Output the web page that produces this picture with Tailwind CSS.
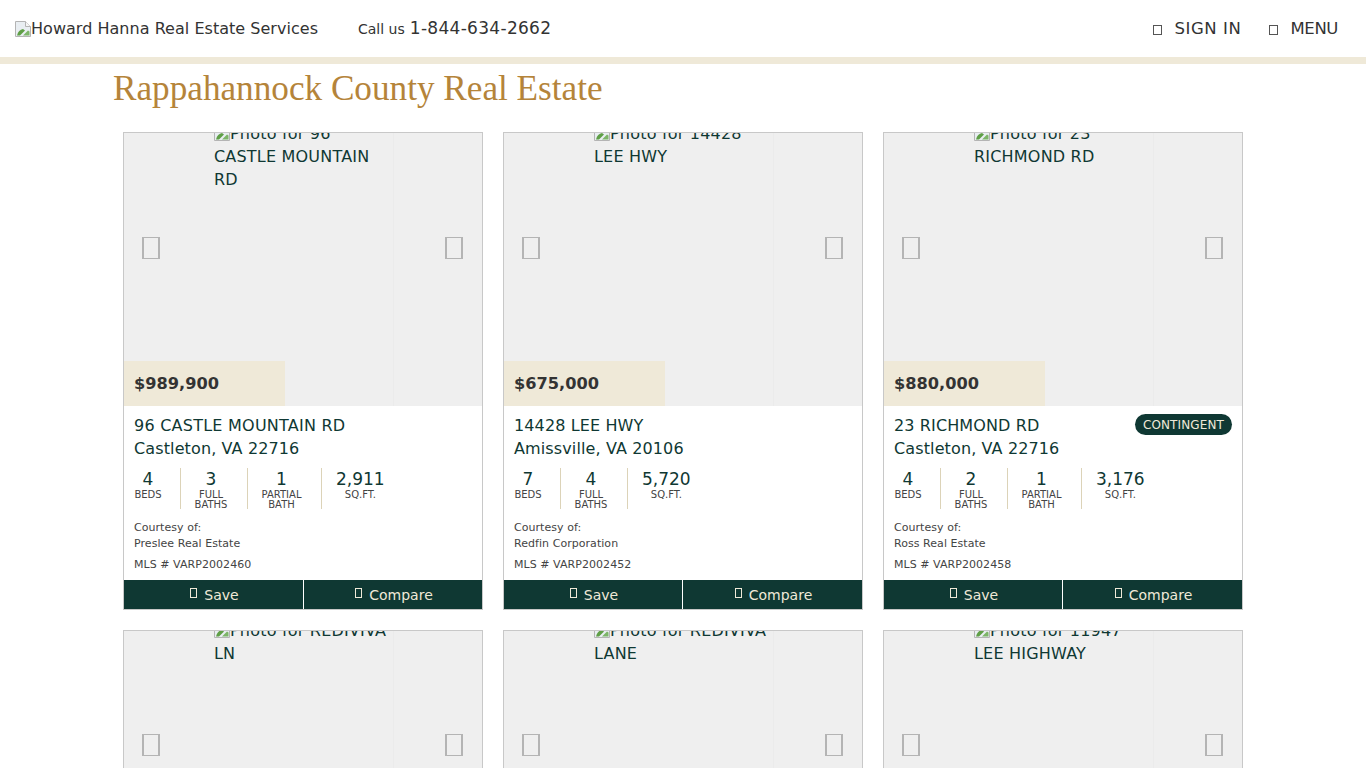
<!DOCTYPE html>
<html lang="en">
<head>
<meta charset="utf-8">
<title>Rappahannock County Real Estate</title>
<script src="https://cdn.jsdelivr.net/npm/@tailwindcss/browser@4"></script>
</head>
<body class="h-[768px] overflow-hidden bg-white font-['DejaVu_Sans',sans-serif] text-[#0f3833]">
<svg width="0" height="0" class="absolute">
  <symbol id="broken" viewBox="0 0 16 16">
    <path d="M.5.5h10l5 5v10H.5z" fill="#e9eef2" stroke="#b4b4b4"/>
    <path d="M10.5.5v5h5" fill="#f6f6f6" stroke="#b4b4b4"/>
    <path d="M2 14.5c1-4 3-6 6-6.500l2 1.500-5 5z" fill="#5f9f46"/>
    <path d="M8 14.500l5-5 1.500 1v4z" fill="#7db568"/>
  </symbol>
</svg>
<header class="flex h-[64px] items-center justify-between border-b-[7px] border-[#efe9d8] pl-[15px] pr-[28px] text-[#333]">
  <div class="flex items-center">
    <div class="flex w-[302px] items-center text-[16px] tracking-[0.03px] text-[#333]"><svg class="h-4 w-4 shrink-0"><use href="#broken"/></svg><span class="whitespace-nowrap">Howard Hanna Real Estate Services</span></div>
    <div class="ml-[41px] flex items-baseline gap-[5px]"><span class="text-[14px]">Call us</span><span class="text-[17px] tracking-[0.3px]">1-844-634-2662</span></div>
  </div>
  <nav class="flex items-center gap-[27px] pt-[2px] text-[16.500px]">
    <div class="flex items-center gap-[12px] tracking-[0.6px]"><span class="h-[10px] w-[9px] border border-[#555]"></span>SIGN IN</div>
    <div class="flex items-center gap-[13px] tracking-[-0.4px]"><span class="h-[10px] w-[9px] border border-[#555]"></span>MENU</div>
  </nav>
</header>
<main>
  <h1 class="ml-[113px] mt-[6px] h-[62px] font-['Liberation_Serif',serif] text-[35.200px] leading-[38px] text-[#b5843a]">Rappahannock County Real Estate</h1>
  <div class="ml-[123px] grid w-[1120px] grid-cols-3 gap-x-[20px] gap-y-[20px]">

    <article class="flex h-[478px] flex-col border border-[#c8c8c8] bg-white">
      <div class="relative h-[273px] overflow-hidden bg-[#efefef]">
        <div class="absolute inset-y-0 left-[269px] w-px bg-[#ebebeb]"></div>
        <div class="ml-[90px] -mt-[11px] w-[179px] text-[16px] leading-[23px] tracking-[0.2px]"><svg class="inline h-4 w-4 align-[-2px]"><use href="#broken"/></svg>Photo for 96 CASTLE MOUNTAIN RD</div>
        <span class="absolute left-[18px] top-[104px] h-[22px] w-[18px] border-x-2 border-y border-[#b4b4b4]"></span>
        <span class="absolute right-[19px] top-[104px] h-[22px] w-[18px] border-x-2 border-y border-[#b4b4b4]"></span>
        <div class="absolute bottom-0 left-0 flex h-[45px] w-[161px] items-center bg-[#efe9d8] pl-[10px] pt-[2px] text-[16.200px] font-bold text-[#333]">$989,900</div>
      </div>
      <div class="relative px-[10px] pt-[8px]">
        <p class="text-[16px] leading-[23px] tracking-[0.24px]">96 CASTLE MOUNTAIN RD<br><span class="tracking-[0.12px]">Castleton, VA 22716</span></p>
        <div class="mt-[8px] flex h-[41px] text-center">
          <div class="w-[47px] border-r border-[#dcd3b8] pr-[18px]"><div class="text-[17px] leading-[22px]">4</div><div class="text-[10px] leading-[10px] text-[#444]">BEDS</div></div>
          <div class="w-[67px] border-r border-[#dcd3b8] pl-[8px] pr-[14px]"><div class="text-[17px] leading-[22px]">3</div><div class="text-[10px] leading-[10px] text-[#444]">FULL BATHS</div></div>
          <div class="w-[74px] border-r border-[#dcd3b8] pl-[8px] pr-[14px]"><div class="text-[17px] leading-[22px]">1</div><div class="text-[10px] leading-[10px] text-[#444]">PARTIAL BATH</div></div>
          <div class="pl-[14px]"><div class="text-[17px] leading-[22px]">2,911</div><div class="text-[10px] leading-[10px] text-[#444]">SQ.FT.</div></div>
        </div>
        <p class="mt-[11px] text-[11px] leading-[16px] tracking-[0.05px] text-[#444]">Courtesy of:<br>Preslee Real Estate</p>
        <p class="mt-[5px] text-[11px] leading-[16px] tracking-[0.05px] text-[#444]">MLS # VARP2002460</p>
      </div>
      <div class="mt-auto flex h-[29px] bg-[#0f3833] text-[14px] text-[#efe9d8]">
        <div class="flex w-[180px] items-center justify-center gap-[7px] border-r border-white pl-[2px] pt-[1px]"><span class="h-[10px] w-[7px] -translate-y-0.5 border border-[#efe9d8]"></span>Save</div>
        <div class="flex flex-1 items-center justify-center gap-[7px] pl-[2px] pt-[1px]"><span class="h-[10px] w-[7px] -translate-y-0.5 border border-[#efe9d8]"></span>Compare</div>
      </div>
    </article>

    <article class="flex h-[478px] flex-col border border-[#c8c8c8] bg-white">
      <div class="relative h-[273px] overflow-hidden bg-[#efefef]">
        <div class="absolute inset-y-0 left-[269px] w-px bg-[#ebebeb]"></div>
        <div class="ml-[90px] -mt-[11px] w-[179px] text-[16px] leading-[23px] tracking-[0.2px]"><svg class="inline h-4 w-4 align-[-2px]"><use href="#broken"/></svg>Photo for 14428 LEE HWY</div>
        <span class="absolute left-[18px] top-[104px] h-[22px] w-[18px] border-x-2 border-y border-[#b4b4b4]"></span>
        <span class="absolute right-[19px] top-[104px] h-[22px] w-[18px] border-x-2 border-y border-[#b4b4b4]"></span>
        <div class="absolute bottom-0 left-0 flex h-[45px] w-[161px] items-center bg-[#efe9d8] pl-[10px] pt-[2px] text-[16.200px] font-bold text-[#333]">$675,000</div>
      </div>
      <div class="relative px-[10px] pt-[8px]">
        <p class="text-[16px] leading-[23px] tracking-[0.12px]">14428 LEE HWY<br>Amissville, VA 20106</p>
        <div class="mt-[8px] flex h-[41px] text-center">
          <div class="w-[47px] border-r border-[#dcd3b8] pr-[18px]"><div class="text-[17px] leading-[22px]">7</div><div class="text-[10px] leading-[10px] text-[#444]">BEDS</div></div>
          <div class="w-[67px] border-r border-[#dcd3b8] pl-[8px] pr-[14px]"><div class="text-[17px] leading-[22px]">4</div><div class="text-[10px] leading-[10px] text-[#444]">FULL BATHS</div></div>
          <div class="pl-[14px]"><div class="text-[17px] leading-[22px]">5,720</div><div class="text-[10px] leading-[10px] text-[#444]">SQ.FT.</div></div>
        </div>
        <p class="mt-[11px] text-[11px] leading-[16px] tracking-[0.05px] text-[#444]">Courtesy of:<br>Redfin Corporation</p>
        <p class="mt-[5px] text-[11px] leading-[16px] tracking-[0.05px] text-[#444]">MLS # VARP2002452</p>
      </div>
      <div class="mt-auto flex h-[29px] bg-[#0f3833] text-[14px] text-[#efe9d8]">
        <div class="flex w-[179px] items-center justify-center gap-[7px] border-r border-white pl-[2px] pt-[1px]"><span class="h-[10px] w-[7px] -translate-y-0.5 border border-[#efe9d8]"></span>Save</div>
        <div class="flex flex-1 items-center justify-center gap-[7px] pl-[2px] pt-[1px]"><span class="h-[10px] w-[7px] -translate-y-0.5 border border-[#efe9d8]"></span>Compare</div>
      </div>
    </article>

    <article class="flex h-[478px] flex-col border border-[#c8c8c8] bg-white">
      <div class="relative h-[273px] overflow-hidden bg-[#efefef]">
        <div class="absolute inset-y-0 left-[269px] w-px bg-[#ebebeb]"></div>
        <div class="ml-[90px] -mt-[11px] w-[179px] text-[16px] leading-[23px] tracking-[0.2px]"><svg class="inline h-4 w-4 align-[-2px]"><use href="#broken"/></svg>Photo for 23 RICHMOND RD</div>
        <span class="absolute left-[18px] top-[104px] h-[22px] w-[18px] border-x-2 border-y border-[#b4b4b4]"></span>
        <span class="absolute right-[19px] top-[104px] h-[22px] w-[18px] border-x-2 border-y border-[#b4b4b4]"></span>
        <div class="absolute bottom-0 left-0 flex h-[45px] w-[161px] items-center bg-[#efe9d8] pl-[10px] pt-[2px] text-[16.200px] font-bold text-[#333]">$880,000</div>
      </div>
      <div class="relative px-[10px] pt-[8px]">
        <span class="absolute right-[10px] top-[8px] flex h-[21px] items-center rounded-full bg-[#0f3833] px-[8px] text-[12px] tracking-[0.12px] text-[#efe9d8]">CONTINGENT</span>
        <p class="text-[16px] leading-[23px] tracking-[0.12px]">23 RICHMOND RD<br>Castleton, VA 22716</p>
        <div class="mt-[8px] flex h-[41px] text-center">
          <div class="w-[47px] border-r border-[#dcd3b8] pr-[18px]"><div class="text-[17px] leading-[22px]">4</div><div class="text-[10px] leading-[10px] text-[#444]">BEDS</div></div>
          <div class="w-[67px] border-r border-[#dcd3b8] pl-[8px] pr-[14px]"><div class="text-[17px] leading-[22px]">2</div><div class="text-[10px] leading-[10px] text-[#444]">FULL BATHS</div></div>
          <div class="w-[74px] border-r border-[#dcd3b8] pl-[8px] pr-[14px]"><div class="text-[17px] leading-[22px]">1</div><div class="text-[10px] leading-[10px] text-[#444]">PARTIAL BATH</div></div>
          <div class="pl-[14px]"><div class="text-[17px] leading-[22px]">3,176</div><div class="text-[10px] leading-[10px] text-[#444]">SQ.FT.</div></div>
        </div>
        <p class="mt-[11px] text-[11px] leading-[16px] tracking-[0.05px] text-[#444]">Courtesy of:<br>Ross Real Estate</p>
        <p class="mt-[5px] text-[11px] leading-[16px] tracking-[0.05px] text-[#444]">MLS # VARP2002458</p>
      </div>
      <div class="mt-auto flex h-[29px] bg-[#0f3833] text-[14px] text-[#efe9d8]">
        <div class="flex w-[179px] items-center justify-center gap-[7px] border-r border-white pl-[2px] pt-[1px]"><span class="h-[10px] w-[7px] -translate-y-0.5 border border-[#efe9d8]"></span>Save</div>
        <div class="flex flex-1 items-center justify-center gap-[7px] pl-[2px] pt-[1px]"><span class="h-[10px] w-[7px] -translate-y-0.5 border border-[#efe9d8]"></span>Compare</div>
      </div>
    </article>

    <article class="h-[478px] border border-[#c8c8c8] bg-white">
      <div class="relative h-[273px] overflow-hidden bg-[#efefef]">
        <div class="absolute inset-y-0 left-[269px] w-px bg-[#ebebeb]"></div>
        <div class="ml-[90px] -mt-[12px] w-[179px] text-[16px] leading-[23px] tracking-[0.2px]"><svg class="inline h-4 w-4 align-[-2px]"><use href="#broken"/></svg>Photo for REDIVIVA LN</div>
        <span class="absolute left-[18px] top-[103px] h-[22px] w-[18px] border-x-2 border-y border-[#b4b4b4]"></span>
        <span class="absolute right-[19px] top-[103px] h-[22px] w-[18px] border-x-2 border-y border-[#b4b4b4]"></span>
      </div>
    </article>
    <article class="h-[478px] border border-[#c8c8c8] bg-white">
      <div class="relative h-[273px] overflow-hidden bg-[#efefef]">
        <div class="absolute inset-y-0 left-[269px] w-px bg-[#ebebeb]"></div>
        <div class="ml-[90px] -mt-[12px] w-[179px] text-[16px] leading-[23px] tracking-[0.2px]"><svg class="inline h-4 w-4 align-[-2px]"><use href="#broken"/></svg>Photo for REDIVIVA LANE</div>
        <span class="absolute left-[18px] top-[103px] h-[22px] w-[18px] border-x-2 border-y border-[#b4b4b4]"></span>
        <span class="absolute right-[19px] top-[103px] h-[22px] w-[18px] border-x-2 border-y border-[#b4b4b4]"></span>
      </div>
    </article>
    <article class="h-[478px] border border-[#c8c8c8] bg-white">
      <div class="relative h-[273px] overflow-hidden bg-[#efefef]">
        <div class="absolute inset-y-0 left-[269px] w-px bg-[#ebebeb]"></div>
        <div class="ml-[90px] -mt-[12px] w-[179px] text-[16px] leading-[23px] tracking-[0.2px]"><svg class="inline h-4 w-4 align-[-2px]"><use href="#broken"/></svg>Photo for 11947 LEE HIGHWAY</div>
        <span class="absolute left-[18px] top-[103px] h-[22px] w-[18px] border-x-2 border-y border-[#b4b4b4]"></span>
        <span class="absolute right-[19px] top-[103px] h-[22px] w-[18px] border-x-2 border-y border-[#b4b4b4]"></span>
      </div>
    </article>
  </div>
</main>
</body>
</html>
